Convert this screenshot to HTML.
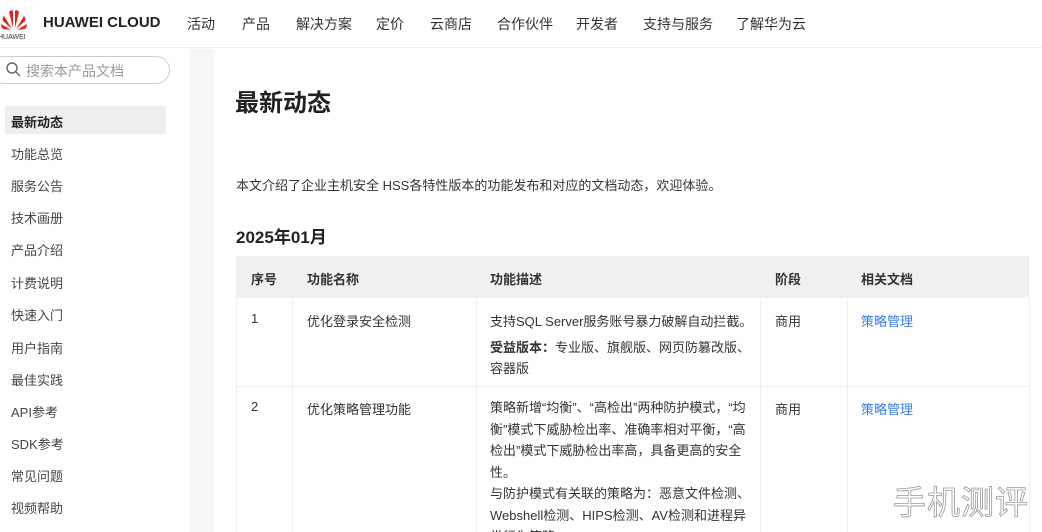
<!DOCTYPE html><html style="overflow:hidden;height:532px"><head><meta charset="utf-8"><style>
*{margin:0;padding:0;box-sizing:border-box}
body{width:1042px;height:532px;overflow:hidden;background:#fff;font-family:"Liberation Sans","Noto Sans CJK SC",sans-serif;color:#333;position:relative}
.a{position:absolute;white-space:nowrap}
.nav{font-size:14px;color:#333;top:14px}
.sb{font-size:13px;color:#444;left:11px}
.t{font-size:13px;color:#333}
.vl{position:absolute;width:1px;background:#eee}
.hl{position:absolute;height:1px;background:#eee}
.lk{color:#3a7de0}
</style></head><body>
<div class="a" style="left:0;top:0;width:1042px;height:48px;background:#fff;border-bottom:1px solid #eee"></div>
<svg class="a" style="left:0;top:6px" width="28" height="34" viewBox="0 0 28 34">
<g fill="#e2231a"><path d="M13 22 L9 6 Q11 3 13 5Z"/><path d="M15 22 L19 6 Q17 3 15 5Z"/><path d="M12 23 L4 10 Q2 12 3 15Z"/><path d="M16 23 L24 10 Q26 12 25 15Z"/><path d="M11 24 L1 18 Q1 21 3 23Z"/><path d="M17 24 L27 18 Q27 21 25 23Z"/></g>
<text x="-2" y="33" font-size="7" font-family="Liberation Sans" fill="#333">HUAWEI</text></svg>
<div class="a" style="left:43px;top:14px;font-size:15px;font-weight:bold;color:#222">HUAWEI CLOUD</div>
<div class="a nav" style="left:187px">活动</div>
<div class="a nav" style="left:242px">产品</div>
<div class="a nav" style="left:296px">解决方案</div>
<div class="a nav" style="left:376px">定价</div>
<div class="a nav" style="left:430px">云商店</div>
<div class="a nav" style="left:497px">合作伙伴</div>
<div class="a nav" style="left:576px">开发者</div>
<div class="a nav" style="left:643px">支持与服务</div>
<div class="a nav" style="left:736px">了解华为云</div>
<div class="a" style="left:190px;top:49px;width:24px;height:483px;background:#f6f6f6"></div>
<div class="a" style="left:-10px;top:56px;width:180px;height:28px;border:1px solid #ccc;border-radius:14px"></div>
<svg class="a" style="left:6px;top:62px" width="15" height="15"><circle cx="6" cy="6" r="5" fill="none" stroke="#666" stroke-width="1.4"/><path d="M10 10L14 14" stroke="#666" stroke-width="1.4"/></svg>
<div class="a" style="left:26px;top:61px;font-size:14px;color:#999">搜索本产品文档</div>
<div class="a" style="left:5px;top:106px;width:161px;height:28px;background:#eee"></div>
<div class="a sb" style="top:112px;font-weight:bold;color:#222">最新动态</div>
<div class="a sb" style="top:144px">功能总览</div>
<div class="a sb" style="top:176px">服务公告</div>
<div class="a sb" style="top:208px">技术画册</div>
<div class="a sb" style="top:240px">产品介绍</div>
<div class="a sb" style="top:273px">计费说明</div>
<div class="a sb" style="top:305px">快速入门</div>
<div class="a sb" style="top:338px">用户指南</div>
<div class="a sb" style="top:370px">最佳实践</div>
<div class="a sb" style="top:402px">API参考</div>
<div class="a sb" style="top:434px">SDK参考</div>
<div class="a sb" style="top:466px">常见问题</div>
<div class="a sb" style="top:498px">视频帮助</div>
<div class="a" style="left:235px;top:83px;font-size:24px;font-weight:bold;color:#222">最新动态</div>
<div class="a t" style="left:236px;top:175px">本文介绍了企业主机安全 HSS各特性版本的功能发布和对应的文档动态，欢迎体验。</div>
<div class="a" style="left:236px;top:223px;font-size:17px;font-weight:bold;color:#222">2025年01月</div>
<div class="a" style="left:236px;top:256px;width:793px;height:42px;background:#f0f0f0"></div>
<div class="a t" style="left:251px;top:269px;font-weight:bold">序号</div>
<div class="a t" style="left:307px;top:269px;font-weight:bold">功能名称</div>
<div class="a t" style="left:490px;top:269px;font-weight:bold">功能描述</div>
<div class="a t" style="left:775px;top:269px;font-weight:bold">阶段</div>
<div class="a t" style="left:861px;top:269px;font-weight:bold">相关文档</div>
<div class="vl" style="left:236px;top:298px;height:234px"></div>
<div class="vl" style="left:292px;top:298px;height:234px"></div>
<div class="vl" style="left:476px;top:298px;height:234px"></div>
<div class="vl" style="left:760px;top:298px;height:234px"></div>
<div class="vl" style="left:847px;top:298px;height:234px"></div>
<div class="vl" style="left:1029px;top:298px;height:234px"></div>
<div class="hl" style="left:236px;top:386px;width:793px"></div>
<div class="a t" style="left:251px;top:311px">1</div>
<div class="a t" style="left:307px;top:311px">优化登录安全检测</div>
<div class="a t" style="left:490px;top:311px">支持SQL Server服务账号暴力破解自动拦截。</div>
<div class="a t" style="left:490px;top:337px;line-height:21px"><b>受益版本：</b>专业版、旗舰版、网页防篡改版、<br>容器版</div>
<div class="a t" style="left:775px;top:311px">商用</div>
<div class="a t lk" style="left:861px;top:311px">策略管理</div>
<div class="a t" style="left:251px;top:399px">2</div>
<div class="a t" style="left:307px;top:399px">优化策略管理功能</div>
<div class="a t" style="left:490px;top:397px;line-height:21.5px">策略新增“均衡”、“高检出”两种防护模式，“均<br>衡”模式下威胁检出率、准确率相对平衡，“高<br>检出”模式下威胁检出率高，具备更高的安全<br>性。</div>
<div class="a t" style="left:490px;top:483px;line-height:21.5px">与防护模式有关联的策略为：恶意文件检测、<br>Webshell检测、HIPS检测、AV检测和进程异<br>常行为策略</div>
<div class="a t" style="left:775px;top:399px">商用</div>
<div class="a t lk" style="left:861px;top:399px">策略管理</div>
<div class="a" style="left:893px;top:476px;font-size:33px;color:#fff;letter-spacing:1px;-webkit-text-stroke:0.8px #999">手机测评</div>
</body></html>
